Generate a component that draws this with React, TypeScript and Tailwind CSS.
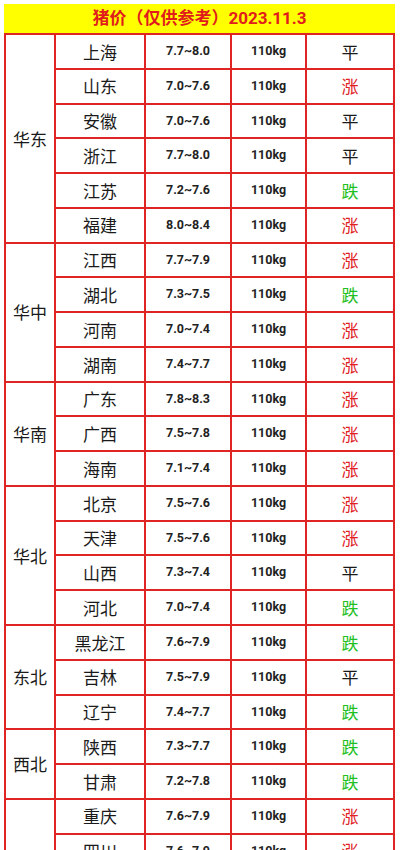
import React from "react";

type Row = [string, string, "涨" | "跌" | "平"];
type Region = { name: string; rows: Row[] };

const data: Region[] = [
  {
    name: "华东",
    rows: [
      ["上海", "7.7~8.0", "平"],
      ["山东", "7.0~7.6", "涨"],
      ["安徽", "7.0~7.6", "平"],
      ["浙江", "7.7~8.0", "平"],
      ["江苏", "7.2~7.6", "跌"],
      ["福建", "8.0~8.4", "涨"],
    ],
  },
  {
    name: "华中",
    rows: [
      ["江西", "7.7~7.9", "涨"],
      ["湖北", "7.3~7.5", "跌"],
      ["河南", "7.0~7.4", "涨"],
      ["湖南", "7.4~7.7", "涨"],
    ],
  },
  {
    name: "华南",
    rows: [
      ["广东", "7.8~8.3", "涨"],
      ["广西", "7.5~7.8", "涨"],
      ["海南", "7.1~7.4", "涨"],
    ],
  },
  {
    name: "华北",
    rows: [
      ["北京", "7.5~7.6", "涨"],
      ["天津", "7.5~7.6", "涨"],
      ["山西", "7.3~7.4", "平"],
      ["河北", "7.0~7.4", "跌"],
    ],
  },
  {
    name: "东北",
    rows: [
      ["黑龙江", "7.6~7.9", "跌"],
      ["吉林", "7.5~7.9", "平"],
      ["辽宁", "7.4~7.7", "跌"],
    ],
  },
  {
    name: "西北",
    rows: [
      ["陕西", "7.3~7.7", "跌"],
      ["甘肃", "7.2~7.8", "跌"],
    ],
  },
  {
    name: "西南",
    rows: [
      ["重庆", "7.6~7.9", "涨"],
      ["四川", "7.6~7.9", "涨"],
      ["云南", "7.4~7.8", "涨"],
      ["贵州", "7.5~7.8", "涨"],
    ],
  },
];

const spanClass: Record<number, string> = {
  1: "row-span-1",
  2: "row-span-2",
  3: "row-span-3",
  4: "row-span-4",
  5: "row-span-5",
  6: "row-span-6",
};

const trendClass: Record<string, string> = {
  涨: "text-[#e0201e]",
  跌: "text-[#1fc01f]",
  平: "text-[#1a1a1a]",
};

const cjk = "font-['Noto_Sans_CJK_SC',sans-serif]";
const num = "font-['Roboto','Noto_Sans_CJK_SC',sans-serif]";

export default function App() {
  return (
    <div className="w-[400px] min-h-[850px] bg-white pt-[4px] pl-[4px]">
      <div className="grid w-[391px] grid-cols-[48px_88px_84px_73px_86px] auto-rows-[32.78px] grid-rows-[29px] gap-[2px] bg-[#df2424] px-[2px] pb-[2px]">
        <div
          className={`col-span-5 -mx-[2px] flex items-center justify-center bg-[#ffff00] text-[17px] font-bold text-[#e01c1c] ${num}`}
        >
          猪价（仅供参考）2023.11.3
        </div>
        {data.map((region) => (
          <React.Fragment key={region.name}>
            <div
              className={`${spanClass[region.rows.length]} flex items-center justify-center bg-white text-[17px] text-[#1a1a1a] ${cjk}`}
            >
              {region.name}
            </div>
            {region.rows.map(([prov, price, trend]) => (
              <React.Fragment key={prov}>
                <div
                  className={`flex items-center justify-center bg-white text-[17px] text-[#1a1a1a] ${cjk}`}
                >
                  {prov}
                </div>
                <div
                  className={`flex items-center justify-center bg-white text-[12.5px] font-bold text-[#222] ${num}`}
                >
                  {price}
                </div>
                <div
                  className={`flex items-center justify-center bg-white text-[12.5px] font-bold text-[#222] ${num}`}
                >
                  110kg
                </div>
                <div
                  className={`flex items-center justify-center bg-white text-[17px] ${trendClass[trend]} ${cjk}`}
                >
                  {trend}
                </div>
              </React.Fragment>
            ))}
          </React.Fragment>
        ))}
      </div>
    </div>
  );
}
